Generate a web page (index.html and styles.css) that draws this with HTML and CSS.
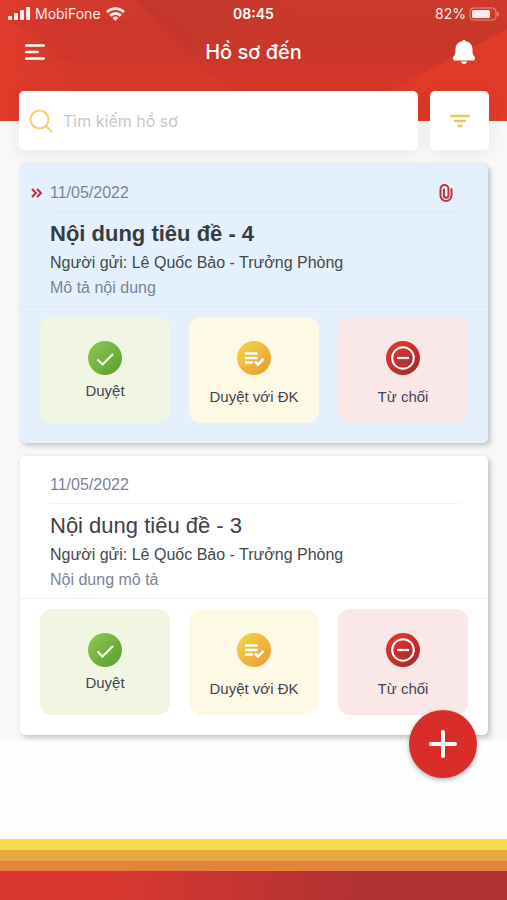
FILE: index.html
```html
<!DOCTYPE html>
<html lang="vi">
<head>
<meta charset="utf-8">
<meta name="viewport" content="width=device-width, initial-scale=1">
<title>Hồ sơ đến</title>
<link rel="stylesheet" href="styles.css">
</head>
<body>
<svg class="defs" aria-hidden="true">
  <defs>
    <linearGradient id="green" x1="0" y1="0" x2="1" y2="1"><stop offset="0" stop-color="#96c656"/><stop offset="1" stop-color="#53a02a"/></linearGradient>
    <linearGradient id="amber" x1="0" y1="0" x2="1" y2="1"><stop offset="0" stop-color="#f6d548"/><stop offset="1" stop-color="#e99b33"/></linearGradient>
    <linearGradient id="red" x1="0" y1="0" x2="1" y2="1"><stop offset="0.2" stop-color="#dc362e"/><stop offset="1" stop-color="#a5252a"/></linearGradient>
    <symbol id="approve" viewBox="0 0 34 34"><circle cx="17" cy="17" r="17" fill="url(#green)"/><path d="M9.500 18.500l5 5L25 13" fill="none" stroke="#fff" stroke-width="2.200"/></symbol>
    <symbol id="condition" viewBox="0 0 34 34"><circle cx="17" cy="17" r="17" fill="url(#amber)"/><path d="M8 12.500h12.500M8 17h12.500M8 21.500h8M18 20.500l3 3 5.500-5.500" fill="none" stroke="#fff" stroke-width="2.500"/></symbol>
    <symbol id="reject" viewBox="0 0 34 34"><circle cx="17" cy="17" r="17" fill="url(#red)"/><circle cx="17" cy="17" r="10.800" fill="none" stroke="#fff" stroke-width="2"/><path d="M11 17h12" stroke="#fff" stroke-width="2.200"/></symbol>
  </defs>
</svg>
<header class="header">
  <svg class="header-art" viewBox="0 0 507 121" preserveAspectRatio="none" aria-hidden="true">
    <defs>
      <linearGradient id="base" x1="0" y1="0" x2="0" y2="1"><stop offset="0" stop-color="#d1392c"/><stop offset="0.500" stop-color="#d2382a"/><stop offset="0.750" stop-color="#dc3a29"/><stop offset="1" stop-color="#e13a2a"/></linearGradient>
      <linearGradient id="side" x1="0" y1="0" x2="1" y2="0"><stop offset="0" stop-color="#df3b2b"/><stop offset="1" stop-color="#df3b2b" stop-opacity="0"/></linearGradient>
      <linearGradient id="facet" x1="0" y1="0" x2="0" y2="1"><stop offset="0" stop-color="#cb392d"/><stop offset="0.550" stop-color="#c9372b"/><stop offset="1" stop-color="#d83829"/></linearGradient>
      <linearGradient id="shade" x1="0" y1="0" x2="1" y2="0"><stop offset="0" stop-color="#bd352c"/><stop offset="1" stop-color="#bd352c" stop-opacity="0"/></linearGradient>
    </defs>
    <path d="M0 0h507v121H0z" fill="url(#base)"/>
    <path d="M0 0h80v121H0z" fill="url(#side)"/>
    <path d="M10 20L60 60H180L145 18z" fill="#c5352a" opacity=".25"/>
    <path d="M135 0h372v29L390 91H228L165 36z" fill="url(#facet)"/>
    <path d="M135 0h190L190 52z" fill="url(#shade)" opacity=".5"/>
    <path d="M320 0h187v20L430 0z" fill="#d5392b" opacity=".6"/>
    <path d="M507 29v92H390V91z" fill="#e03a28"/>
  </svg>
  <div class="status">
    <div class="status-left">
      <svg width="22" height="14" viewBox="0 0 22 14" fill="#fff" aria-hidden="true"><rect x="0" y="9" width="4" height="4" rx="1"/><rect x="6" y="6" width="4" height="7" rx="1"/><rect x="12" y="3" width="4" height="10" rx="1"/><rect x="18" y="0" width="4" height="13" rx="1"/></svg>
      <span>MobiFone</span>
      <svg width="19" height="14" viewBox="0 0 19 14" fill="none" stroke="#fff" stroke-width="2.800" aria-hidden="true"><path d="M1 5.200a12 12 0 0 1 17 0M4.200 8.700a7.500 7.500 0 0 1 10.600 0"/><path d="M6.500 11a4.300 4.300 0 0 1 6 0L9.500 14z" fill="#fff" stroke="none"/></svg>
    </div>
    <span class="clock">08:45</span>
    <div class="status-right">
      <span>82%</span>
      <svg width="30" height="14" viewBox="0 0 30 14" aria-hidden="true"><rect x="1" y="1" width="26" height="12" rx="3.500" fill="none" stroke="#fff" stroke-opacity=".5"/><rect x="3" y="3" width="18" height="8" rx="1.500" fill="#fff"/><path d="M28 5c2.500.5 2.500 3.500 0 4z" fill="#fff" opacity=".5"/></svg>
    </div>
  </div>
  <nav class="nav">
    <button class="icon-button" aria-label="Menu"><svg width="20" height="16" viewBox="0 0 20 16" stroke="#fff" stroke-width="2.400" stroke-linecap="round"><path d="M1.200 1.500h17.600M1.200 8h11.600M1.200 14.500h17.600"/></svg></button>
    <h1>Hồ sơ đến</h1>
    <button class="icon-button bell" aria-label="Thông báo"><svg width="22" height="24" viewBox="0 0 22 24" fill="#fff"><path d="M11 0c1 0 1.500.6 1.700 1.200 4.500.8 6.800 4 6.800 8.300 0 4 .3 5.500 1.700 6.700 1.300 1.200 1 4.300-.7 4.300h-19c-1.700 0-2-3.100-.7-4.300 1.400-1.200 1.700-2.700 1.700-6.700 0-4.300 2.300-7.500 6.800-8.300C9.500.6 10 0 11 0zM8 21.500h6c0 3.300-6 3.300-6 0z"/></svg></button>
  </nav>
</header>
<main class="content">
  <form class="search" role="search">
    <label class="search-box">
      <svg width="24" height="24" viewBox="0 0 24 24" fill="none" stroke="#f4d27a" stroke-width="2.200" stroke-linecap="round" aria-hidden="true"><circle cx="10.500" cy="10.500" r="9"/><path d="M17 17l5.500 5.500"/></svg>
      <input type="search" placeholder="Tìm kiếm hồ sơ" aria-label="Tìm kiếm hồ sơ">
    </label>
    <button class="filter" type="button" aria-label="Bộ lọc"><svg width="20" height="14" viewBox="0 0 20 14" stroke="#e8c75c" stroke-width="2.400" stroke-linecap="round"><path d="M1.200 2h17.600M5 7h10M8.500 12h3"/></svg></button>
  </form>

  <article class="card unread">
    <div class="card-body">
      <div class="meta">
        <svg class="arrows" width="12" height="10" viewBox="0 0 12 10" fill="none" stroke="#bf2b38" stroke-width="2" aria-hidden="true"><path d="M1 1l4 4-4 4M6 1l4 4-4 4"/></svg>
        <time datetime="2022-05-11">11/05/2022</time>
        <svg class="clip" width="14" height="18" viewBox="0 0 14 18" fill="none" stroke="#b93642" stroke-width="2" stroke-linecap="round" aria-hidden="true"><path d="M12.500 5v6.500a5.500 5.500 0 0 1-11 0V5a4 4 0 0 1 8 0v6.500a2.300 2.300 0 0 1-4.600 0V5.500"/></svg>
      </div>
      <h2>Nội dung tiêu đề - 4</h2>
      <p class="sender">Người gửi: Lê Quốc Bảo - Trưởng Phòng</p>
      <p class="summary">Mô tả nội dung</p>
    </div>
    <div class="actions">
      <button class="action approve"><svg><use href="#approve"/></svg><span>Duyệt</span></button>
      <button class="action condition"><svg><use href="#condition"/></svg><span>Duyệt với ĐK</span></button>
      <button class="action reject"><svg><use href="#reject"/></svg><span>Từ chối</span></button>
    </div>
  </article>

  <article class="card">
    <div class="card-body">
      <div class="meta"><time datetime="2022-05-11">11/05/2022</time></div>
      <h2>Nội dung tiêu đề - 3</h2>
      <p class="sender">Người gửi: Lê Quốc Bảo - Trưởng Phòng</p>
      <p class="summary">Nội dung mô tả</p>
    </div>
    <div class="actions">
      <button class="action approve"><svg><use href="#approve"/></svg><span>Duyệt</span></button>
      <button class="action condition"><svg><use href="#condition"/></svg><span>Duyệt với ĐK</span></button>
      <button class="action reject"><svg><use href="#reject"/></svg><span>Từ chối</span></button>
    </div>
  </article>
</main>
<button class="fab" aria-label="Thêm hồ sơ"><svg width="28" height="28" viewBox="0 0 28 28" stroke="#fff" stroke-width="4" stroke-linecap="round"><path d="M14 2v24M2 14h24"/></svg></button>
<footer class="footer"><div class="yellow"></div><div class="gold"></div><div class="orange"></div><div class="crimson"></div></footer>
</body>
</html>
```
FILE: styles.css
```css
* { box-sizing: border-box; }

body {
  margin: 0;
  min-height: 100vh;
  display: flex;
  flex-direction: column;
  position: relative;
  background: #fefefe;
  color: #45474d;
  font: 16px/24px "Liberation Sans", Arial, sans-serif;
}

h1, h2, p { margin: 0; }
button { border: 0; padding: 0; font: inherit; color: inherit; cursor: pointer; }
svg { flex: none; display: block; }
.defs { position: absolute; width: 0; height: 0; }

.header {
  position: relative;
  height: 121px;
  color: #fff;
  font-family: Inter, sans-serif;
}
.header-art { position: absolute; inset: 0; width: 100%; height: 100%; }

.status {
  position: relative;
  display: grid;
  grid-template-columns: 1fr auto 1fr;
  align-items: center;
  height: 28px;
  padding: 0 8px;
  font-size: 14px;
}
.status-left, .status-right { display: flex; align-items: center; gap: 5px; opacity: 0.9; }
.status-right { justify-content: flex-end; gap: 3px; }
.clock { font-weight: 600; }

.nav {
  position: relative;
  display: grid;
  grid-template-columns: 1fr auto 1fr;
  align-items: center;
  height: 48px;
  padding: 0 25px;
}
.nav h1 { font-size: 20px; font-weight: 500; }
.icon-button { background: none; justify-self: start; }
.bell { justify-self: end; margin-right: 7px; }

.content {
  background: #f8f8f8;
  padding: 0 19px 6px 20px;
}

.search {
  position: relative;
  display: flex;
  gap: 12px;
  height: 59px;
  margin: -30px -1px 14px;
}
.search-box, .filter {
  display: flex;
  align-items: center;
  background: #fff;
  border-radius: 5px;
  box-shadow: 0 4px 16px rgba(90, 30, 30, 0.07);
}
.search-box { flex: 1; gap: 10px; padding: 0 10px; }
.search-box input {
  flex: 1;
  min-width: 0;
  border: 0;
  padding: 0;
  outline: 0;
  background: none;
  font: 16px/24px Inter, sans-serif;
}
.search-box input::placeholder { color: #c8c8c8; opacity: 1; }
.filter { width: 59px; justify-content: center; }

.card {
  background: #fff;
  border-radius: 5px;
  box-shadow: 3px 3px 5px rgba(60, 80, 80, 0.25), 0 0 3px rgba(60, 80, 80, 0.12);
}
.card + .card { margin-top: 13px; }
.unread { background: #e4f1fd; }

.card-body {
  padding: 10px 28px 6px 30px;
  border-bottom: 1px solid rgba(40, 60, 80, 0.08);
}
.unread .card-body, .unread .meta { border-color: rgba(40, 60, 80, 0.04); }
.meta {
  position: relative;
  display: flex;
  align-items: center;
  justify-content: space-between;
  height: 38px;
  padding-right: 7px;
  border-bottom: 1px solid rgba(40, 60, 80, 0.06);
  color: #7b8494;
}
.arrows { position: absolute; left: -19px; }
.card h2 { margin-top: 7px; font-size: 22px; line-height: 30px; font-weight: 400; color: #404143; }
.card.unread h2 { font-weight: 700; color: #383c40; }
.sender { line-height: 27px; }
.summary { color: #7b8494; }

.actions {
  display: grid;
  grid-template-columns: repeat(3, 1fr);
  gap: 19px;
  padding: 10px 20px 20px;
}
.action {
  display: flex;
  flex-direction: column;
  align-items: center;
  gap: 12px;
  height: 106px;
  padding-top: 24px;
  border-radius: 12px;
  font-size: 15px;
  line-height: 20px;
  color: #454456;
}
.action svg { width: 34px; height: 34px; }
.approve { gap: 6px; background: #f0f6e2; }
.condition { background: #fdf9e5; }
.reject { background: #f9e8e7; }

.fab {
  position: absolute;
  right: 30px;
  bottom: 122px;
  display: grid;
  place-items: center;
  width: 68px;
  height: 68px;
  border-radius: 50%;
  background: #d92d29;
  box-shadow: 0 2px 5px rgba(20, 40, 50, 0.35);
}

.footer { margin-top: auto; }
.footer div { height: 11px; }
.footer .yellow { background: #f6dc4b; }
.footer .gold { background: #e9a73f; }
.footer .orange { height: 10px; background: #e28439; }
.footer .crimson { height: 29px; background: linear-gradient(100deg, #d8382f 22%, #b23234 70%); }
```
